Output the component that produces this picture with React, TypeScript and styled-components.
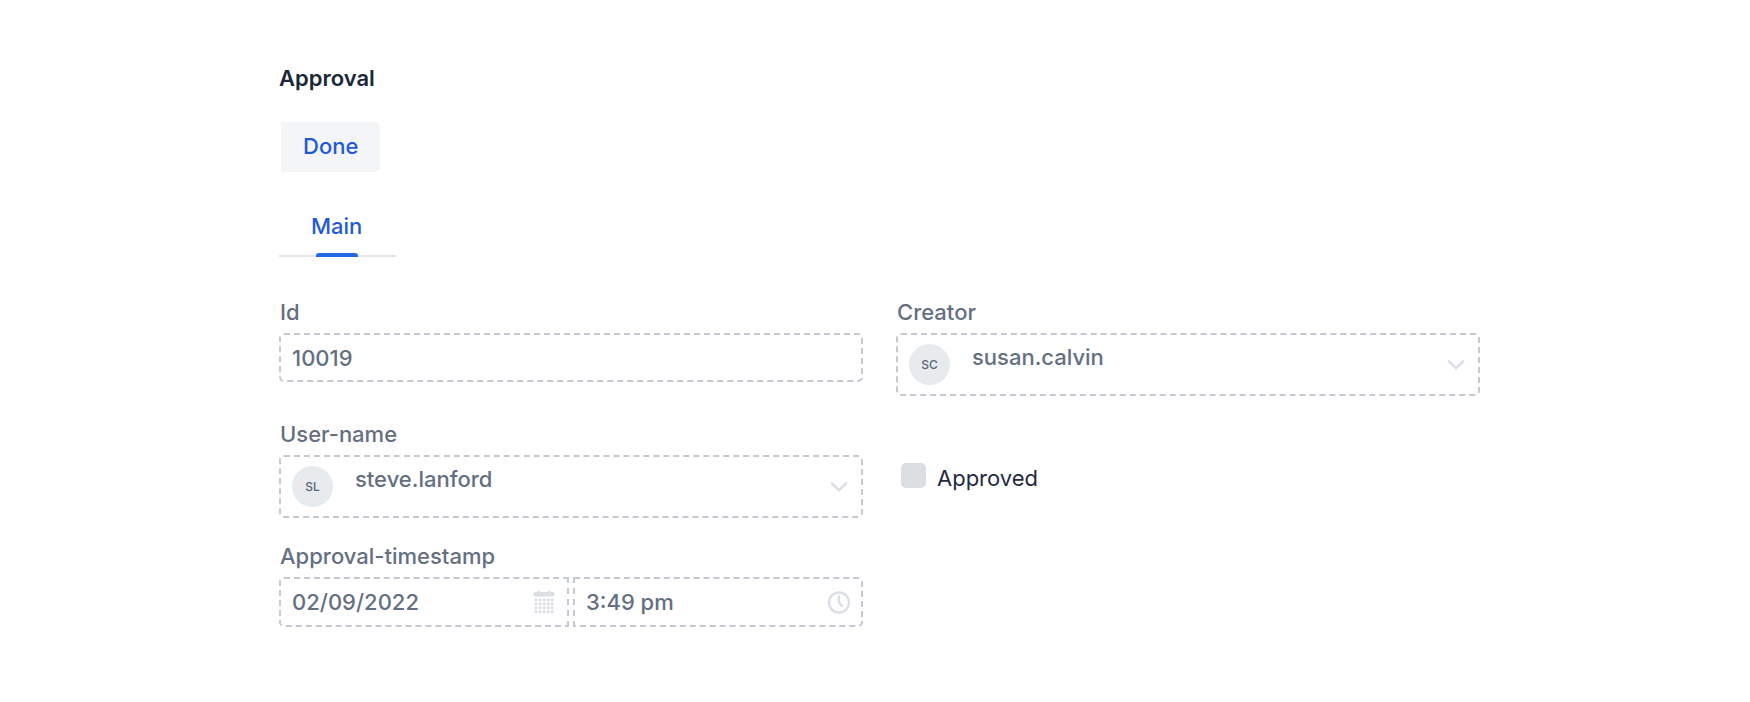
import React, { useId, useState } from "react";
import styled, { createGlobalStyle, css } from "styled-components";

const GlobalStyle = createGlobalStyle`
  *, *::before, *::after { box-sizing: border-box; }
  body {
    margin: 0;
    background: #fff;
    font-family: Inter, "Liberation Sans", sans-serif;
    font-size: 22px;
    line-height: 26px;
    -webkit-font-smoothing: antialiased;
  }
`;

const Page = styled.main`
  padding: 65px 270px 74px 279px;
`;

const Title = styled.h1`
  margin: 0 0 31px;
  font-size: 22px;
  line-height: 26px;
  font-weight: 600;
  color: #1c2738;
`;

const ActionButton = styled.button`
  display: block;
  height: 50px;
  margin-left: 2px;
  padding: 0 22px 2px;
  border: 0;
  border-radius: 0 5px 5px 0;
  background: #f3f5f7;
  color: #1f5ad6;
  font: inherit;
  font-weight: 500;
  cursor: pointer;
`;

const TabList = styled.div`
  display: flex;
  margin: 36px 0 42px;
`;

const Tab = styled.button`
  display: flex;
  flex-direction: column;
  align-items: center;
  justify-content: space-between;
  height: 49px;
  padding: 5px 34px 0 32px;
  border: 0;
  background: linear-gradient(#e4e8ec, #e4e8ec) bottom / 100% 2px no-repeat;
  color: #1f5ad6;
  font: inherit;
  font-weight: 500;
  cursor: pointer;

  &::after {
    content: "";
    width: 42px;
    height: 4px;
    border-radius: 3px 3px 0 0;
    background: #2468e5;
  }
`;

const Form = styled.form`
  display: grid;
  grid-template-columns: 1fr 1fr;
  gap: 25px 33px;
  align-items: start;
`;

const FieldBox = styled.div`
  display: flex;
  flex-direction: column;
  gap: 8px;
  min-width: 0;
`;

const Label = styled.label`
  padding-left: 1px;
  font-weight: 500;
  color: #646f81;
`;

const control = css`
  width: 100%;
  min-width: 0;
  margin: 0;
  border: 2px dashed #c4c9d2;
  border-radius: 5px;
  background: transparent;
  color: #646f81;
  font: inherit;
  font-weight: 500;
`;

const TextInput = styled.input<{ $join?: "left" | "right" }>`
  ${control}
  height: ${({ $join }) => ($join ? 50 : 49)}px;
  padding: 0 11px;
  ${({ $join }) => $join === "left" && "border-radius: 5px 0 0 5px;"}
  ${({ $join }) => $join === "right" && "border-radius: 0 5px 5px 0;"}
`;

const Wrap = styled.div`
  position: relative;
  flex: 1;
  min-width: 0;
  display: flex;
`;

const UserSelect = styled.select`
  ${control}
  appearance: none;
  height: 63px;
  padding: 0 48px 16px 74px;
`;

const Avatar = styled.span`
  position: absolute;
  top: 11px;
  left: 13px;
  display: grid;
  place-items: center;
  width: 41px;
  height: 41px;
  border-radius: 50%;
  background: #e7ebee;
  color: #5b6677;
  font-size: 12px;
  font-weight: 500;
  pointer-events: none;
`;

const TrailingIcon = styled.svg`
  position: absolute;
  top: 0;
  bottom: 0;
  right: 12px;
  margin: auto 0;
  color: #dcdfe5;
  pointer-events: none;
`;

const DateTime = styled.div`
  display: flex;
  gap: 4px;
`;

const CheckRow = styled.div`
  display: flex;
  align-items: flex-start;
  gap: 11px;
  padding: 42px 0 0 5px;
`;

const Checkbox = styled.input`
  appearance: none;
  width: 25px;
  height: 25px;
  margin: 0;
  border-radius: 5px;
  background: #dbdfe4;

  &:checked { background: #2468e5; }
`;

const CheckLabel = styled.label`
  padding-top: 2px;
  color: #1f2b3d;
`;

function ChevronIcon() {
  return (
    <TrailingIcon width="24" height="24" viewBox="0 0 24 24" fill="none" aria-hidden="true">
      <path d="M5 8.500l7 6.700 7-6.700" stroke="currentColor" strokeWidth="2.600" strokeLinecap="round" />
    </TrailingIcon>
  );
}

function CalendarIcon() {
  const columns = [3, 7.1, 11.2, 15.3, 19.2];
  const rows = [9.8, 13.8, 17.8, 21.8];
  return (
    <TrailingIcon width="24" height="24" viewBox="0 0 24 24" fill="currentColor" aria-hidden="true">
      <path d="M1.700 2H4.500V1.500q0-1 1.200-1t1.200 1V2H15V1.500q0-1 1.200-1t1.200 1V2h2.600q1.600 0 1.600 1.500v1Q21.600 6.500 20 6.500H1.700Q.3 6.500 .3 4.500v-1Q.3 2 1.700 2Z" />
      {rows.map((y) =>
        columns.map((x) => <circle key={`${x}-${y}`} cx={x} cy={y} r="1.6" />)
      )}
    </TrailingIcon>
  );
}

function ClockIcon() {
  return (
    <TrailingIcon width="24" height="24" viewBox="0 0 24 24" fill="none" stroke="currentColor" strokeLinecap="round" strokeLinejoin="round" aria-hidden="true">
      <circle cx="12" cy="12.500" r="10" strokeWidth="2.300" />
      <path d="M12 6.500v6l3 3.300" strokeWidth="2.600" />
    </TrailingIcon>
  );
}

function UserField({ label, user, initials }: { label: string; user: string; initials: string }) {
  const id = useId();
  return (
    <FieldBox>
      <Label htmlFor={id}>{label}</Label>
      <Wrap>
        <UserSelect id={id} defaultValue={user}>
          <option value={user}>{user}</option>
        </UserSelect>
        <Avatar aria-hidden="true">{initials}</Avatar>
        <ChevronIcon />
      </Wrap>
    </FieldBox>
  );
}

export default function App() {
  const [approved, setApproved] = useState(false);
  return (
    <>
      <GlobalStyle />
      <Page>
        <Title>Approval</Title>
        <ActionButton type="button">Done</ActionButton>
        <TabList role="tablist">
          <Tab type="button" role="tab" aria-selected="true">Main</Tab>
        </TabList>
        <Form>
          <FieldBox>
            <Label htmlFor="record-id">Id</Label>
            <TextInput id="record-id" defaultValue="10019" readOnly />
          </FieldBox>
          <UserField label="Creator" user="susan.calvin" initials="SC" />
          <UserField label="User-name" user="steve.lanford" initials="SL" />
          <CheckRow>
            <Checkbox
              id="approved"
              type="checkbox"
              checked={approved}
              onChange={(event) => setApproved(event.target.checked)}
            />
            <CheckLabel htmlFor="approved">Approved</CheckLabel>
          </CheckRow>
          <FieldBox>
            <Label htmlFor="approval-date">Approval-timestamp</Label>
            <DateTime>
              <Wrap>
                <TextInput id="approval-date" $join="left" defaultValue="02/09/2022" readOnly />
                <CalendarIcon />
              </Wrap>
              <Wrap>
                <TextInput aria-label="Approval time" $join="right" defaultValue="3:49 pm" readOnly />
                <ClockIcon />
              </Wrap>
            </DateTime>
          </FieldBox>
        </Form>
      </Page>
    </>
  );
}
